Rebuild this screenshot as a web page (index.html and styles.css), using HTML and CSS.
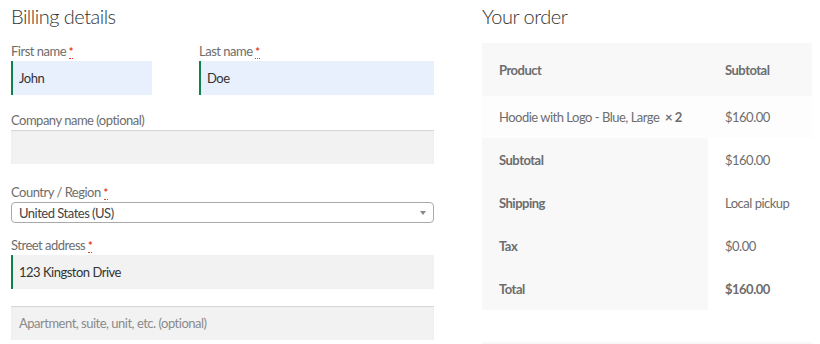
FILE: index.html
```html
<!DOCTYPE html>
<html lang="en">
<head>
    <meta charset="UTF-8">
    <meta name="viewport" content="width=device-width, initial-scale=1.0">
    <title>Checkout</title>
    <link rel="stylesheet" href="styles.css">
</head>
<body>

    <div class="checkout">
        <!-- Billing form -->
        <div class="billing">
            <h3>Billing details</h3>

            <div class="form-row form-row-split">
                <div class="field field-first">
                    <label>First name <abbr class="required" title="required">*</abbr></label>
                    <div class="input-text autofill valid">John</div>
                </div>
                <div class="field field-last">
                    <label>Last name <abbr class="required" title="required">*</abbr></label>
                    <div class="input-text autofill valid">Doe</div>
                </div>
            </div>

            <div class="form-row row-company">
                <label>Company name <span class="optional">(optional)</span></label>
                <div class="input-text"></div>
            </div>

            <div class="form-row row-country">
                <label>Country / Region <abbr class="required" title="required">*</abbr></label>
                <div class="select">
                    <span>United States (US)</span>
                    <span class="arrow"></span>
                </div>
            </div>

            <div class="form-row row-street">
                <label>Street address <abbr class="required" title="required">*</abbr></label>
                <div class="input-text valid">123 Kingston Drive</div>
            </div>

            <div class="form-row last-row">
                <div class="input-text placeholder">Apartment, suite, unit, etc. (optional)</div>
            </div>
        </div>

        <!-- Order review -->
        <div class="order">
            <h3>Your order</h3>
            <table class="order-table">
                <thead>
                    <tr>
                        <th class="col-name">Product</th>
                        <th class="col-total">Subtotal</th>
                    </tr>
                </thead>
                <tbody>
                    <tr>
                        <td class="col-name">Hoodie with Logo - Blue, Large&nbsp; <strong>×&nbsp;2</strong></td>
                        <td class="col-total">$160.00</td>
                    </tr>
                </tbody>
                <tfoot>
                    <tr>
                        <th>Subtotal</th>
                        <td>$160.00</td>
                    </tr>
                    <tr>
                        <th>Shipping</th>
                        <td>Local pickup</td>
                    </tr>
                    <tr>
                        <th>Tax</th>
                        <td>$0.00</td>
                    </tr>
                    <tr class="order-total">
                        <th>Total</th>
                        <td><strong>$160.00</strong></td>
                    </tr>
                </tfoot>
            </table>
            <div class="payment"></div>
        </div>
    </div>

</body>
</html>
```

FILE: styles.css
```css
/* Basic Reset */
* {
    margin: 0;
    padding: 0;
    box-sizing: border-box;
}

body {
    font-family: Lato, "Noto Sans", sans-serif;
    font-size: 13px;
    letter-spacing: -0.5px;
    color: #6d6d6d;
    background: #fff;
}

.checkout {
    display: flex;
    gap: 48px;
    padding: 2px 0 0 11px;
}

h3 {
    font-size: 20px;
    font-weight: 300;
    letter-spacing: -0.5px;
    line-height: 28px;
    color: #333;
    margin-bottom: 11px;
}

/* Billing form */
.billing {
    width: 423px;
}

.form-row {
    margin-bottom: 15px;
}

.row-company {
    margin-bottom: 18px;
}

.row-country {
    margin-bottom: 12px;
}

.row-street {
    margin-bottom: 17px;
}

.last-row {
    margin-bottom: 0;
}

.form-row-split {
    display: flex;
    justify-content: space-between;
}

.field-first {
    width: 188px;
}

.field-first .input-text {
    width: 141px;
}

.field-last {
    width: 235px;
}

label {
    display: block;
    line-height: 20px;
}

abbr.required {
    color: #e2401c;
    text-decoration: none;
    border-bottom: 1px dotted #e2401c;
    font-weight: 700;
    font-size: 11px;
    line-height: 1;
}

.input-text {
    height: 34px;
    padding: 0 8px;
    line-height: 34px;
    background: #f2f2f2;
    color: #333;
    box-shadow: inset 0 1px 1px rgba(0, 0, 0, 0.125);
}

.input-text.autofill {
    background: #e8f0fe;
    box-shadow: none;
}

.input-text.valid {
    border-left: 2px solid #0f834d;
    padding-left: 6px;
    box-shadow: none;
}

.input-text.placeholder {
    color: #8a8a8a;
}

.select {
    display: flex;
    align-items: center;
    justify-content: space-between;
    height: 21px;
    padding: 0 7px;
    border: 1px solid #aaa;
    border-radius: 4px;
    color: #444;
}

.arrow {
    width: 0;
    height: 0;
    border-left: 3px solid transparent;
    border-right: 3px solid transparent;
    border-top: 4px solid #888;
}

/* Order review */
.order {
    width: 330px;
}

.order h3 {
    margin-bottom: 13px;
}

.order-table {
    width: 100%;
    border-collapse: collapse;
    table-layout: fixed;
}

.order-table th,
.order-table td {
    text-align: left;
    padding: 0 17px;
    height: 43px;
    white-space: nowrap;
    vertical-align: middle;
}

.order-table th {
    font-weight: 700;
}

.order-table thead th {
    background: #f8f8f8;
    height: 53px;
}

.order-table tbody td {
    background: #fdfdfd;
    height: 42px;
}

.order-table tfoot th {
    background: #f8f8f8;
}

.order-table .col-name {
    width: 226px;
}

.order-table tfoot td {
    background: #fff;
}

.payment {
    margin-top: 32px;
    height: 2px;
    background: #f8f8f8;
}
```
